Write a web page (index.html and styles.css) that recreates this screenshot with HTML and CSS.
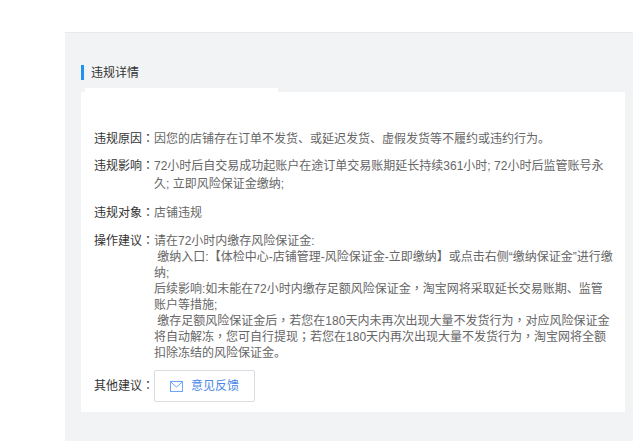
FILE: index.html
```html
<!DOCTYPE html>
<html lang="zh-Hans">
<head>
<meta charset="utf-8">
<title>违规详情</title>
<link rel="stylesheet" href="styles.css">
</head>
<body>
<main class="panel">
  <h2 class="heading">违规详情</h2>
  <div class="tab"></div>
  <section class="card">
    <div class="row">
      <div class="label">违规原因<span class="mid" lang="zh-Hant">：</span></div>
      <div class="value">因您的店铺存在订单不发货、或延迟发货、虚假发货等不履约或违约行为。</div>
    </div>
    <div class="row tall">
      <div class="label">违规影响<span class="mid" lang="zh-Hant">：</span></div>
      <div class="value">72小时后自交易成功起账户在途订单交易账期延长持续361小时; 72小时后监管账号永久; 立即风险保证金缴纳;</div>
    </div>
    <div class="row tall">
      <div class="label">违规对象<span class="mid" lang="zh-Hant">：</span></div>
      <div class="value">店铺违规</div>
    </div>
    <div class="row advice">
      <div class="label">操作建议<span class="mid" lang="zh-Hant">：</span></div>
      <div class="value">请在72小时内缴存风险保证金:<br>&nbsp;缴纳入口:【体检中心-店铺管理-风险保证金-立即缴纳】或点击右侧“缴纳保证金”进行缴纳;<br>后续影响:如未能在72小时内缴存足额风险保证金<span class="mid" lang="zh-Hant">，</span>淘宝网将采取延长交易账期、监管账户等措施;<br>&nbsp;缴存足额风险保证金后<span class="mid" lang="zh-Hant">，</span>若您在180天内未再次出现大量不发货行为<span class="mid" lang="zh-Hant">，</span>对应风险保证金将自动解冻<span class="mid" lang="zh-Hant">，</span>您可自行提现<span class="mid" lang="zh-Hant">；</span>若您在180天内再次出现大量不发货行为<span class="mid" lang="zh-Hant">，</span>淘宝网将全额扣除冻结的风险保证金。</div>
    </div>
    <div class="row other">
      <div class="label">其他建议<span class="mid" lang="zh-Hant">：</span></div>
      <button class="feedback" type="button">
        <svg class="mail" width="13" height="11" viewBox="0 0 13 11" fill="none" stroke="#6ea5ff" stroke-width="1"><rect x=".5" y=".5" width="12" height="10"/><path d="M.5 .8 6.500 6l6-5.200"/></svg>
        <span>意见反馈</span>
      </button>
    </div>
  </section>
</main>
</body>
</html>
```
FILE: styles.css
```css
* { box-sizing: border-box; }
html, body { margin: 0; height: 100%; background: #fff; overflow: hidden; }
body {
  padding: 32px 0 0 65px;
  font: 12px/16px "Liberation Sans", "Noto Sans CJK SC", sans-serif;
  color: #333;
}
.panel {
  height: 409px;
  background: #f2f3f5;
  border-top: 1px solid #e8e9eb;
  padding: 32px 8px 0 16px;
}
.heading {
  margin: 0;
  height: 15px;
  border-left: 3px solid #1f91ee;
  padding-left: 7px;
  font-size: 12px;
  font-weight: 400;
  line-height: 17px;
  color: #333;
}
.tab {
  width: 193px;
  height: 4px;
  margin: 8px 0 0 4px;
  background: #fff;
}
.card {
  height: 320px;
  background: #fff;
  padding: 39px 12px 0 13px;
}
.row { display: flex; margin-bottom: 10px; }
.tall { line-height: 18px; margin-bottom: 11px; }
.advice { margin-bottom: 9px; }
.label { flex: none; width: 60px; color: #333; white-space: nowrap; }
.value { flex: 1; color: #666; }
.mid { font-family: "Noto Sans CJK TC", sans-serif; line-height: 1; }
.other { align-items: center; }
.feedback {
  display: flex;
  align-items: center;
  gap: 8px;
  width: 101px;
  height: 32px;
  padding: 0 0 0 15px;
  background: #fff;
  border: 1px solid #d9dce1;
  border-radius: 2px;
  font: inherit;
  color: #4a86ea;
}
.mail { flex: none; }
```
